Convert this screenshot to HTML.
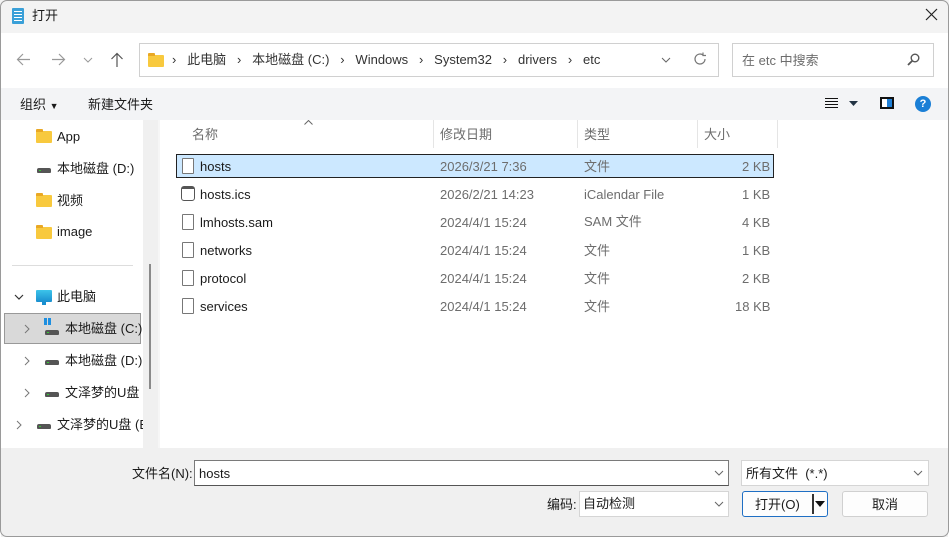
<!DOCTYPE html>
<html><head><meta charset="utf-8"><style>
*{margin:0;padding:0;box-sizing:border-box}
body{width:949px;height:537px;background:#fff;font-family:"Liberation Sans","Noto Sans CJK SC",sans-serif;font-size:13px;color:#1a1a1a;position:relative;overflow:hidden}
.a{position:absolute;white-space:nowrap}
.c{margin-top:-4px}
.cc{margin-top:-5px}
.g{color:#6d6d6d}
.fold{position:absolute;width:16px;height:12px;background:#f8c93e;border-radius:1px}
.fold:before{content:"";position:absolute;left:0;top:-2px;width:7px;height:3px;background:#e9a825;border-radius:1px 1px 0 0}
.drv{position:absolute;width:14px;height:5px;background:#555;border-radius:2px 2px 1px 1px}
.drv:after{content:"";position:absolute;left:2px;top:2px;width:2px;height:1px;background:#3c3}
.doc{position:absolute;width:12px;height:16px;border:1px solid #777;border-radius:1px;background:#fff}
.box{position:absolute;border:1px solid #d0d0d0;background:#fff}
</style></head><body>
<div class="a" style="left:0;top:0;width:949px;height:33px;background:#f3f3f3"></div>
<div class="a" style="left:0;top:0;width:949px;height:537px;border:1px solid #9a9a9a;border-radius:7px;z-index:5;pointer-events:none"></div>
<!-- title -->
<div class="a" style="left:12px;top:8px;width:12px;height:16px;background:#3aa0d8;border-radius:1px"></div>
<div class="a" style="left:14px;top:11px;width:8px;height:1px;background:#fff;box-shadow:0 3px #fff,0 6px #fff,0 9px #fff"></div>
<div class="a c" style="left:32px;top:9px;font-size:13px">打开</div>
<svg class="a" style="left:925px;top:8px" width="13" height="13"><path d="M1 1L12 12M12 1L1 12" stroke="#222" stroke-width="1.2"/></svg>
<!-- nav -->
<svg class="a" style="left:16px;top:53px" width="15" height="13"><path d="M14 6.5H1.5M7 1L1.5 6.5L7 12" stroke="#999" stroke-width="1.2" fill="none"/></svg>
<svg class="a" style="left:51px;top:53px" width="15" height="13"><path d="M1 6.5H13.5M8 1L13.5 6.5L8 12" stroke="#999" stroke-width="1.2" fill="none"/></svg>
<svg class="a" style="left:83px;top:57px" width="10" height="6"><path d="M1 1L5 5L9 1" stroke="#999" fill="none"/></svg>
<svg class="a" style="left:110px;top:52px" width="14" height="15"><path d="M7 15V1.5M1.5 7L7 1.5L12.5 7" stroke="#555" stroke-width="1.2" fill="none"/></svg>
<div class="box" style="left:139px;top:43px;width:580px;height:34px"></div>
<div class="fold" style="left:148px;top:55px"></div>
<div class="a c" style="left:172px;top:53px;font-size:13px;color:#333">›&nbsp;&nbsp; 此电脑 &nbsp;&nbsp;›&nbsp;&nbsp; 本地磁盘 (C:) &nbsp;&nbsp;›&nbsp;&nbsp; Windows &nbsp;&nbsp;›&nbsp;&nbsp; System32 &nbsp;&nbsp;›&nbsp;&nbsp; drivers &nbsp;&nbsp;›&nbsp;&nbsp; etc</div>
<svg class="a" style="left:661px;top:57px" width="10" height="6"><path d="M1 1L5 5L9 1" stroke="#666" fill="none"/></svg>
<svg class="a" style="left:693px;top:52px" width="14" height="14"><path d="M12 7A5 5 0 1 1 10 3M10 0.5V3.5H13" stroke="#777" stroke-width="1.2" fill="none"/></svg>
<div class="box" style="left:732px;top:43px;width:202px;height:34px"></div>
<div class="a g c" style="left:742px;top:54px">在 etc 中搜索</div>
<svg class="a" style="left:907px;top:53px" width="13" height="13"><circle cx="8" cy="5" r="3.8" stroke="#555" stroke-width="1.4" fill="none"/><path d="M5.3 7.7L1 12" stroke="#555" stroke-width="1.8"/></svg>
<!-- toolbar -->
<div class="a" style="left:1px;top:88px;width:947px;height:32px;background:#f3f4f6"></div>
<div class="a c" style="left:20px;top:98px">组织 <span style="font-size:9px">▼</span></div>
<div class="a c" style="left:88px;top:98px">新建文件夹</div>
<div class="a" style="left:825px;top:98px;width:13px;height:1px;background:#111;box-shadow:0 3px #111,0 6px #111,0 9px #111"></div>
<svg class="a" style="left:849px;top:101px" width="9" height="5"><path d="M0 0H9L4.5 5Z" fill="#234"/></svg>
<div class="a" style="left:880px;top:97px;width:14px;height:12px;border:2px solid #111;background:linear-gradient(90deg,#fff 50%,#1f7fd6 50%)"></div>
<div class="a" style="left:915px;top:96px;width:16px;height:16px;border-radius:50%;background:#1a7fd6;color:#fff;font-size:11px;font-weight:bold;text-align:center;line-height:16px">?</div>
<!-- left nav -->
<div class="a" style="left:143px;top:120px;width:15px;height:328px;background:#f0f0f0"></div>
<div class="a" style="left:149px;top:264px;width:2px;height:125px;background:#8a8a8a"></div>
<div class="a" style="left:158px;top:120px;width:2px;height:328px;background:#f6f6f6"></div>
<div class="fold" style="left:36px;top:131px"></div><div class="a" style="left:57px;top:129px">App</div>
<div class="drv" style="left:37px;top:168px"></div><div class="a c" style="left:57px;top:162px">本地磁盘 (D:)</div>
<div class="fold" style="left:36px;top:195px"></div><div class="a cc" style="left:57px;top:195px">视频</div>
<div class="fold" style="left:36px;top:227px"></div><div class="a" style="left:57px;top:224px">image</div>
<div class="a" style="left:12px;top:265px;width:121px;height:1px;background:#ddd"></div>
<svg class="a" style="left:14px;top:294px" width="10" height="6"><path d="M1 1L5 5L9 1" stroke="#333" stroke-width="1.2" fill="none"/></svg>
<div class="a" style="left:36px;top:290px;width:16px;height:12px;background:linear-gradient(#3cc4ea,#1a8fcf);border-radius:1px"></div>
<div class="a" style="left:42px;top:302px;width:4px;height:3px;background:#1a8fcf"></div>
<div class="a cc" style="left:57px;top:291px">此电脑</div>
<div class="a" style="left:4px;top:313px;width:137px;height:31px;background:#d9d9d9;border:1px solid #999"></div>
<svg class="a" style="left:24px;top:324px" width="6" height="10"><path d="M1 1L5 5L1 9" stroke="#777" fill="none"/></svg>
<div class="a" style="left:44px;top:318px;width:7px;height:7px;background:linear-gradient(90deg,#1e8fe0 3px,transparent 3px,transparent 4px,#1e8fe0 4px)"></div>
<div class="drv" style="left:45px;top:330px"></div><div class="a c" style="left:65px;top:322px">本地磁盘 (C:)</div>
<svg class="a" style="left:24px;top:356px" width="6" height="10"><path d="M1 1L5 5L1 9" stroke="#777" fill="none"/></svg>
<div class="drv" style="left:45px;top:360px"></div><div class="a c" style="left:65px;top:354px">本地磁盘 (D:)</div>
<svg class="a" style="left:24px;top:388px" width="6" height="10"><path d="M1 1L5 5L1 9" stroke="#777" fill="none"/></svg>
<div class="drv" style="left:45px;top:392px"></div><div class="a c" style="left:65px;top:386px;width:78px;overflow:hidden">文泽梦的U盘 (</div>
<svg class="a" style="left:16px;top:420px" width="6" height="10"><path d="M1 1L5 5L1 9" stroke="#777" fill="none"/></svg>
<div class="drv" style="left:37px;top:424px"></div><div class="a c" style="left:57px;top:418px;width:86px;overflow:hidden">文泽梦的U盘 (E</div>
<!-- list header -->
<svg class="a" style="left:304px;top:120px" width="9" height="5"><path d="M0.5 4.5L4.5 0.5L8.5 4.5" stroke="#666" fill="none"/></svg>
<div class="a g cc" style="left:192px;top:129px">名称</div>
<div class="a" style="left:433px;top:120px;width:1px;height:28px;background:#e5e5e5"></div>
<div class="a g cc" style="left:440px;top:129px">修改日期</div>
<div class="a" style="left:577px;top:120px;width:1px;height:28px;background:#e5e5e5"></div>
<div class="a g cc" style="left:584px;top:129px">类型</div>
<div class="a" style="left:697px;top:120px;width:1px;height:28px;background:#e5e5e5"></div>
<div class="a g cc" style="left:704px;top:129px">大小</div>
<div class="a" style="left:777px;top:120px;width:1px;height:28px;background:#e5e5e5"></div>
<!-- rows -->
<div class="a" style="left:176px;top:154px;width:598px;height:24px;background:#cce8ff;border:1px solid #222"></div>
<div class="doc" style="left:182px;top:158px"></div><div class="a" style="left:200px;top:159px">hosts</div>
<div class="a g" style="left:440px;top:159px">2026/3/21 7:36</div><div class="a g cc" style="left:584px;top:161px">文件</div><div class="a g" style="left:742px;top:159px">2 KB</div>
<div class="doc" style="left:181px;top:186px;width:14px;height:15px;border-radius:3px;border-top-width:3px;border-color:#555"></div><div class="a" style="left:200px;top:187px">hosts.ics</div>
<div class="a g" style="left:440px;top:187px">2026/2/21 14:23</div><div class="a g" style="left:584px;top:187px">iCalendar File</div><div class="a g" style="left:742px;top:187px">1 KB</div>
<div class="doc" style="left:182px;top:214px"></div><div class="a" style="left:200px;top:215px">lmhosts.sam</div>
<div class="a g" style="left:440px;top:215px">2024/4/1 15:24</div><div class="a g cc" style="left:584px;top:216px">SAM 文件</div><div class="a g" style="left:742px;top:215px">4 KB</div>
<div class="doc" style="left:182px;top:242px"></div><div class="a" style="left:200px;top:243px">networks</div>
<div class="a g" style="left:440px;top:243px">2024/4/1 15:24</div><div class="a g cc" style="left:584px;top:245px">文件</div><div class="a g" style="left:742px;top:243px">1 KB</div>
<div class="doc" style="left:182px;top:270px"></div><div class="a" style="left:200px;top:271px">protocol</div>
<div class="a g" style="left:440px;top:271px">2024/4/1 15:24</div><div class="a g cc" style="left:584px;top:273px">文件</div><div class="a g" style="left:742px;top:271px">2 KB</div>
<div class="doc" style="left:182px;top:298px"></div><div class="a" style="left:200px;top:299px">services</div>
<div class="a g" style="left:440px;top:299px">2024/4/1 15:24</div><div class="a g cc" style="left:584px;top:301px">文件</div><div class="a g" style="left:735px;top:299px">18 KB</div>
<!-- bottom -->
<div class="a" style="left:1px;top:448px;width:947px;height:89px;background:#f0f0f0"></div>
<div class="a c" style="left:132px;top:467px">文件名(N):</div>
<div class="a" style="left:194px;top:460px;width:535px;height:26px;background:#fff;border:1px solid #7a7a7a;border-bottom-color:#555"></div>
<div class="a" style="left:199px;top:466px">hosts</div>
<svg class="a" style="left:714px;top:470px" width="10" height="6"><path d="M1 1L5 5L9 1" stroke="#666" fill="none"/></svg>
<div class="a" style="left:741px;top:460px;width:188px;height:26px;background:#fff;border:1px solid #d5d5d5"></div>
<div class="a c" style="left:746px;top:467px">所有文件 &nbsp;(*.*)</div>
<svg class="a" style="left:913px;top:470px" width="10" height="6"><path d="M1 1L5 5L9 1" stroke="#666" fill="none"/></svg>
<div class="a c" style="left:547px;top:498px">编码:</div>
<div class="a" style="left:579px;top:491px;width:150px;height:26px;background:#fff;border:1px solid #d5d5d5"></div>
<div class="a cc" style="left:583px;top:498px">自动检测</div>
<svg class="a" style="left:714px;top:501px" width="10" height="6"><path d="M1 1L5 5L9 1" stroke="#666" fill="none"/></svg>
<div class="a" style="left:742px;top:491px;width:86px;height:26px;background:#fdfdfd;border:1px solid #1f6fc4;border-radius:3px"></div>
<div class="a c" style="left:755px;top:498px">打开(O)</div>
<div class="a" style="left:812px;top:494px;width:2px;height:20px;background:#333"></div>
<svg class="a" style="left:815px;top:501px" width="10" height="6"><path d="M0 0H10L5 6Z" fill="#111"/></svg>
<div class="a" style="left:842px;top:491px;width:86px;height:26px;background:#fdfdfd;border:1px solid #d0d0d0;border-radius:3px"></div>
<div class="a cc" style="left:872px;top:499px">取消</div>
</body></html>
